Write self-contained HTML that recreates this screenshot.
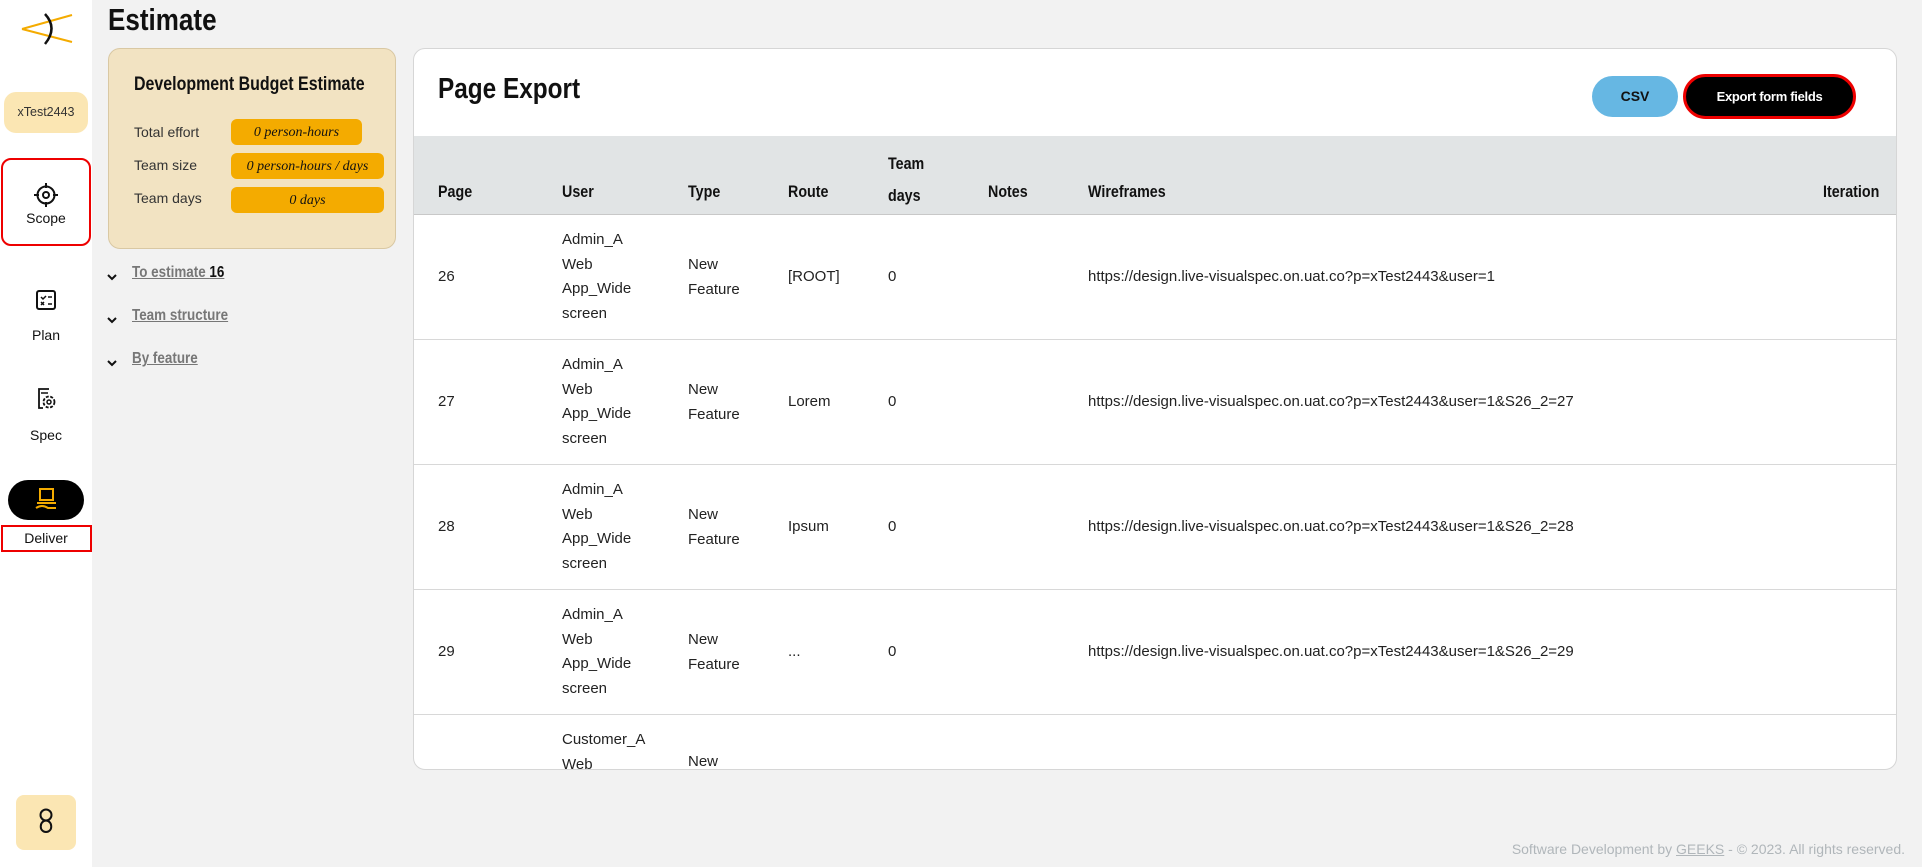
<!DOCTYPE html>
<html><head><meta charset="utf-8"><style>
*{box-sizing:border-box;margin:0;padding:0}
body{width:1922px;height:867px;background:#f2f2f2;font-family:"Liberation Sans",sans-serif;position:relative;overflow:hidden;color:#111}
.abs{position:absolute}
.side{left:0;top:0;width:92px;height:867px;background:#fff}
.nar{transform:scaleX(0.84);transform-origin:left center;white-space:nowrap}
.lab{font-size:14px;width:92px;text-align:center;left:0}
.card{left:108px;top:48px;width:288px;height:201px;background:#f2e3c2;border:1px solid #d9c8a3;border-radius:12px}
.pill{background:#f4ab00;border-radius:6px;font-style:italic;font-size:14px;text-align:center;line-height:28px;height:26px;font-family:"Liberation Serif",serif}
.main{left:413px;top:48px;width:1484px;height:722px;background:#fff;border:1px solid #d6d6d6;border-radius:12px;overflow:hidden}
.th{position:absolute;font-size:17px;font-weight:bold;top:0;transform:scaleX(0.84);transform-origin:left center;white-space:nowrap}
.row{position:absolute;left:0;width:1484px;height:125px;border-bottom:1.5px solid #d8d8d8;font-size:15px;color:#222}
.row div{position:absolute}
.lnk{font-size:16px;font-weight:bold;color:#777;text-decoration:underline}
</style></head><body>
<div class="abs side">
<svg class="abs" style="left:20px;top:10px" width="54" height="40"><path d="M2 19 L52 5 M2 19 L52 32" stroke="#f4ab00" stroke-width="2" fill="none"/><path d="M25 4 Q38 18 25 34" stroke="#111" stroke-width="2.5" fill="none"/></svg>
<div class="abs" style="left:4px;top:92px;width:84px;height:41px;background:#fbe6b3;border-radius:12px;font-size:12.5px;text-align:center;line-height:41px;color:#333">xTest2443</div>
<div class="abs" style="left:1px;top:158px;width:90px;height:88px;border:2.5px solid #e00;border-radius:10px"></div>
<svg class="abs" style="left:33px;top:182px" width="26" height="26"><circle cx="13" cy="13" r="8.5" stroke="#111" stroke-width="2" fill="none"/><circle cx="13" cy="13" r="3" stroke="#111" stroke-width="2" fill="none"/><path d="M13 1v5M13 20v5M1 13h5M20 13h5" stroke="#111" stroke-width="2"/></svg>
<div class="abs lab" style="top:210px">Scope</div>
<svg class="abs" style="left:35px;top:289px" width="22" height="22"><rect x="2" y="2" width="18" height="18" rx="2" stroke="#111" stroke-width="2" fill="none"/><path d="M6 8l2 2 3-3M13 8h4M6 13l3 3M9 13l-3 3M13 15h4" stroke="#111" stroke-width="1.5" fill="none"/></svg>
<div class="abs lab" style="top:327px">Plan</div>
<svg class="abs" style="left:35px;top:387px" width="22" height="24"><path d="M14 2H4v19h4" stroke="#111" stroke-width="1.8" fill="none"/><path d="M6 6h7" stroke="#111" stroke-width="1.5"/><circle cx="14" cy="15" r="5.5" stroke="#111" stroke-width="1.8" fill="none" stroke-dasharray="3 1.5"/><circle cx="14" cy="15" r="2" stroke="#111" stroke-width="1.5" fill="none"/></svg>
<div class="abs lab" style="top:427px">Spec</div>
<div class="abs" style="left:8px;top:480px;width:76px;height:40px;background:#000;border-radius:20px"></div>
<svg class="abs" style="left:33px;top:486px" width="26" height="28"><rect x="7" y="3" width="13" height="11" stroke="#f4ab00" stroke-width="2" fill="none"/><path d="M4 17h19M3 22q6-4 12 0h8" stroke="#f4ab00" stroke-width="2" fill="none"/></svg>
<div class="abs" style="left:1px;top:525px;width:91px;height:27px;border:2.5px solid #e00"></div>
<div class="abs lab" style="top:530px">Deliver</div>
<div class="abs" style="left:16px;top:795px;width:60px;height:55px;background:#fbe6b3;border-radius:8px"></div>
<svg class="abs" style="left:37px;top:807px" width="18" height="32"><circle cx="9" cy="8" r="5.5" stroke="#111" stroke-width="2" fill="none"/><path d="M9 13.5 C2 14 2 25 9 25 C16 25 16 14 9 13.5" stroke="#111" stroke-width="2" fill="none"/></svg>
</div>
<div class="abs nar" style="left:108px;top:1px;font-size:31px;font-weight:bold;line-height:38px">Estimate</div>
<div class="abs card">
<div class="abs nar" style="left:25px;top:25px;font-size:19px;font-weight:bold">Development Budget Estimate</div>
<div class="abs" style="left:25px;top:75px;font-size:14px;color:#333">Total effort</div>
<div class="abs" style="left:25px;top:108px;font-size:14px;color:#333">Team size</div>
<div class="abs" style="left:25px;top:141px;font-size:14px;color:#333">Team days</div>
<div class="abs pill" style="left:122px;top:70px;width:131px">0 person-hours</div>
<div class="abs pill" style="left:122px;top:104px;width:153px">0 person-hours / days</div>
<div class="abs pill" style="left:122px;top:138px;width:153px">0 days</div>
</div>
<svg class="abs" style="left:106px;top:273px" width="12" height="9"><path d="M2 2l4 4 4-4" stroke="#111" stroke-width="2" fill="none"/></svg>
<div class="abs lnk nar" style="left:132px;top:264px">To estimate <span style="color:#111">16</span></div>
<svg class="abs" style="left:106px;top:316px" width="12" height="9"><path d="M2 2l4 4 4-4" stroke="#111" stroke-width="2" fill="none"/></svg>
<div class="abs lnk nar" style="left:132px;top:307px">Team structure</div>
<svg class="abs" style="left:106px;top:359px" width="12" height="9"><path d="M2 2l4 4 4-4" stroke="#111" stroke-width="2" fill="none"/></svg>
<div class="abs lnk nar" style="left:132px;top:350px">By feature</div>
<div class="abs main">
<div class="abs nar" style="left:24px;top:24px;font-size:29px;font-weight:bold">Page Export</div>
<div class="abs" style="left:1178px;top:27px;width:86px;height:41px;background:#66b7e3;border-radius:21px;text-align:center;line-height:41px;font-size:14px;font-weight:bold">CSV</div>
<div class="abs" style="left:1269px;top:25px;width:173px;height:45px;background:#000;border:3px solid #e00;border-radius:23px;text-align:center;line-height:39px;font-size:13px;font-weight:bold;color:#fff;letter-spacing:-0.3px">Export form fields</div>
<div class="abs" style="left:0;top:87px;width:1484px;height:79px;background:#e1e4e5;border-bottom:1.5px solid #c8c8c8">
<div class="th" style="left:24px;top:46px">Page</div><div class="th" style="left:148px;top:46px">User</div><div class="th" style="left:274px;top:46px">Type</div><div class="th" style="left:374px;top:46px">Route</div><div class="th" style="left:474px;top:12px;line-height:32px">Team<br>days</div><div class="th" style="left:574px;top:46px">Notes</div><div class="th" style="left:674px;top:46px">Wireframes</div><div class="th" style="left:1409px;top:46px">Iteration</div>
</div>
<div class="row" style="top:166px"><div style="left:24px;top:53px">26</div><div style="left:148px;top:13px;line-height:24.5px">Admin_A<br>Web<br>App_Wide<br>screen</div><div style="left:274px;top:38px;line-height:24.5px">New<br>Feature</div><div style="left:374px;top:53px">[ROOT]</div><div style="left:474px;top:53px">0</div><div style="left:674px;top:53px">https://design.live-visualspec.on.uat.co?p=xTest2443&amp;user=1</div></div>
<div class="row" style="top:291px"><div style="left:24px;top:53px">27</div><div style="left:148px;top:13px;line-height:24.5px">Admin_A<br>Web<br>App_Wide<br>screen</div><div style="left:274px;top:38px;line-height:24.5px">New<br>Feature</div><div style="left:374px;top:53px">Lorem</div><div style="left:474px;top:53px">0</div><div style="left:674px;top:53px">https://design.live-visualspec.on.uat.co?p=xTest2443&amp;user=1&amp;S26_2=27</div></div>
<div class="row" style="top:416px"><div style="left:24px;top:53px">28</div><div style="left:148px;top:13px;line-height:24.5px">Admin_A<br>Web<br>App_Wide<br>screen</div><div style="left:274px;top:38px;line-height:24.5px">New<br>Feature</div><div style="left:374px;top:53px">Ipsum</div><div style="left:474px;top:53px">0</div><div style="left:674px;top:53px">https://design.live-visualspec.on.uat.co?p=xTest2443&amp;user=1&amp;S26_2=28</div></div>
<div class="row" style="top:541px"><div style="left:24px;top:53px">29</div><div style="left:148px;top:13px;line-height:24.5px">Admin_A<br>Web<br>App_Wide<br>screen</div><div style="left:274px;top:38px;line-height:24.5px">New<br>Feature</div><div style="left:374px;top:53px">...</div><div style="left:474px;top:53px">0</div><div style="left:674px;top:53px">https://design.live-visualspec.on.uat.co?p=xTest2443&amp;user=1&amp;S26_2=29</div></div>
<div class="row" style="top:666px;border:none"><div style="left:148px;top:13px;line-height:24.5px">Customer_A<br>Web</div><div style="left:274px;top:38px">New</div></div>
</div>
<div class="abs" style="right:17px;top:841px;font-size:14px;color:#b0b6ba">Software Development by <u>GEEKS</u> - © 2023. All rights reserved.</div>
</body></html>
